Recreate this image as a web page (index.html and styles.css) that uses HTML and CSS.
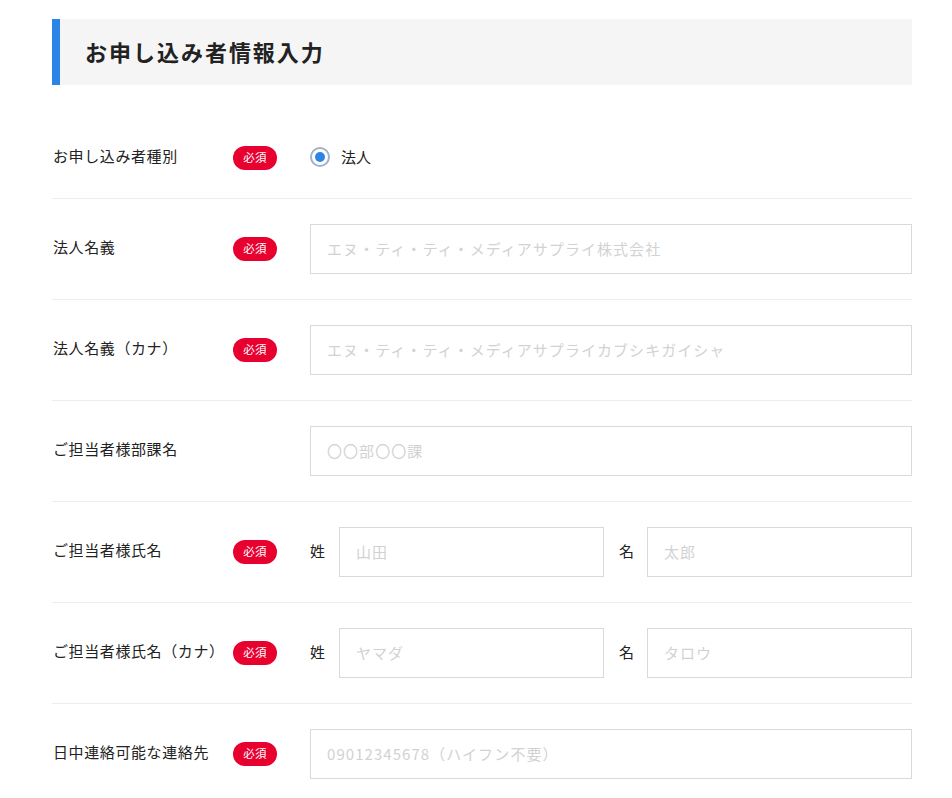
FILE: index.html
```html
<!DOCTYPE html>
<html lang="ja">
<head>
<meta charset="utf-8">
<title>お申し込み者情報入力</title>
<link rel="stylesheet" href="styles.css">
</head>
<body>
<div class="page">
  <h2 class="heading">お申し込み者情報入力</h2>
  <div class="form">
    <div class="row row-radio">
      <div class="label">お申し込み者種別</div>
      <div class="badge-cell"><span class="badge">必須</span></div>
      <div class="field">
        <label class="radio"><span class="radio-mark"><span class="radio-dot"></span></span><span class="radio-text">法人</span></label>
      </div>
    </div>
    <div class="row">
      <div class="label">法人名義</div>
      <div class="badge-cell"><span class="badge">必須</span></div>
      <div class="field"><input class="input" type="text" placeholder="エヌ・ティ・ティ・メディアサプライ株式会社"></div>
    </div>
    <div class="row">
      <div class="label">法人名義（カナ）</div>
      <div class="badge-cell"><span class="badge">必須</span></div>
      <div class="field"><input class="input" type="text" placeholder="エヌ・ティ・ティ・メディアサプライカブシキガイシャ"></div>
    </div>
    <div class="row">
      <div class="label">ご担当者様部課名</div>
      <div class="badge-cell"></div>
      <div class="field"><input class="input" type="text" placeholder="〇〇部〇〇課"></div>
    </div>
    <div class="row">
      <div class="label">ご担当者様氏名</div>
      <div class="badge-cell"><span class="badge">必須</span></div>
      <div class="field split">
        <span class="sub">姓</span><input class="input" type="text" placeholder="山田">
        <span class="sub sub-2">名</span><input class="input" type="text" placeholder="太郎">
      </div>
    </div>
    <div class="row">
      <div class="label">ご担当者様氏名（カナ）</div>
      <div class="badge-cell"><span class="badge">必須</span></div>
      <div class="field split">
        <span class="sub">姓</span><input class="input" type="text" placeholder="ヤマダ">
        <span class="sub sub-2">名</span><input class="input" type="text" placeholder="タロウ">
      </div>
    </div>
    <div class="row row-last">
      <div class="label">日中連絡可能な連絡先</div>
      <div class="badge-cell"><span class="badge">必須</span></div>
      <div class="field"><input class="input" type="text" placeholder="09012345678（ハイフン不要）"></div>
    </div>
  </div>
</div>
</body>
</html>
```

FILE: styles.css
```css
* { box-sizing: border-box; }
html, body { margin: 0; padding: 0; background: #fff; }
body {
  font-family: "Noto Sans CJK JP", "Noto Sans", sans-serif;
  color: #222;
}
.page {
  width: 860px;
  margin: 19px 0 0 52px;
}
.heading {
  margin: 0;
  height: 66px;
  background: #f5f5f5;
  border-left: 8px solid #2b84e6;
  padding-left: 25px;
  padding-bottom: 2px;
  display: flex;
  align-items: center;
  font-size: 22px;
  font-weight: 700;
  letter-spacing: 0.09em;
  color: #222;
}
.form {
  margin-top: 43px;
}
.row {
  display: grid;
  grid-template-columns: 181px 77px 1fr;
  align-items: center;
  padding: 25px 0;
  border-bottom: 1px solid #ececec;
}
.row-radio { padding: 15px 0 25px; }
.row-radio .field { height: 30px; display: flex; align-items: center; }
.row-last { border-bottom: none; }
.label {
  font-size: 15px;
  letter-spacing: 0.04em;
  padding-left: 1px;
  padding-bottom: 5px;
  line-height: 1.4;
  white-space: nowrap;
}
.badge-cell { display: flex; align-items: center; }
.badge {
  display: inline-flex;
  align-items: center;
  justify-content: center;
  width: 44px;
  height: 24px;
  border-radius: 12px;
  background: #e8002f;
  color: #fff;
  font-size: 11.5px;
  letter-spacing: 0.03em;
  line-height: 1;
  padding-bottom: 1px;
}
.radio {
  display: inline-flex;
  align-items: center;
  gap: 11px;
  font-size: 15px;
  margin-top: -2px;
}
.radio-text { padding-bottom: 2px; }
.radio-mark {
  width: 20px;
  height: 20px;
  border-radius: 50%;
  border: 2px solid #9fb3c8;
  display: flex;
  align-items: center;
  justify-content: center;
  background: #fff;
}
.radio-dot {
  width: 10px;
  height: 10px;
  border-radius: 50%;
  background: #2b84e6;
}
.field { display: flex; align-items: center; }
.input {
  width: 100%;
  height: 50px;
  border: 1px solid #d9d9d9;
  border-radius: 0;
  padding: 0 16px 2px;
  font-family: "Noto Sans CJK JP", "Noto Sans", sans-serif;
  font-size: 15px;
  letter-spacing: 0.07em;
  color: #222;
  background: #fff;
  outline: none;
}
.input::placeholder { color: #d2d2d2; }
.split .input { flex: 1; min-width: 0; }
.sub {
  font-size: 15px;
  width: 29px;
  flex: none;
  padding-bottom: 3px;
}
.sub-2 { margin-left: 15px; width: 28px; }
```
